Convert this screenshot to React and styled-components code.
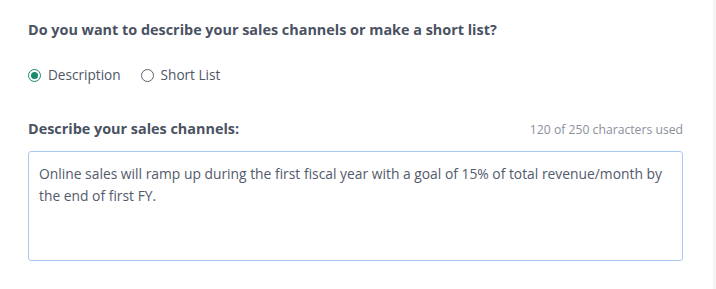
import React from 'react';
import styled, { createGlobalStyle } from 'styled-components';

const GlobalStyle = createGlobalStyle`
    html, body {
        margin: 0;
        padding: 0;
        background: #f3f4f5;
    }
    body {
        font-family: "Open Sans", "Noto Sans", sans-serif;
    }`;

const Page = styled.div`
    width: 713px;
    height: 289px;
    background: #ffffff;
    box-sizing: border-box;
    padding: 20px 30px 0 28px;`;

const Question = styled.h2`
    margin: 0;
    font-size: 14.4px;
    line-height: 20px;
    font-weight: 700;
    color: #4a5262;`;

const RadioRow = styled.div`
    display: flex;
    align-items: center;
    gap: 20px;
    margin-top: 25px;`;

const RadioOption = styled.label`
    display: flex;
    align-items: center;
    gap: 7px;
    font-size: 13.6px;
    line-height: 20px;
    color: #4f5668;
    cursor: pointer;`;

const RadioDot = styled.span`
    width: 13px;
    height: 13px;
    box-sizing: border-box;
    border-radius: 50%;
    border: 1.3px solid ${p => (p.checked ? '#1a8a6b' : '#5a6070')};
    display: flex;
    align-items: center;
    justify-content: center;
    &::after {
        content: '';
        width: 7px;
        height: 7px;
        border-radius: 50%;
        background: #1a8a6b;
        display: ${p => (p.checked ? 'block' : 'none')};
    }`;

const FieldHeader = styled.div`
    display: flex;
    justify-content: space-between;
    align-items: baseline;
    margin-top: 34px;`;

const FieldLabel = styled.div`
    font-size: 14.4px;
    line-height: 20px;
    font-weight: 700;
    color: #4a5262;`;

const Counter = styled.div`
    font-size: 12.2px;
    color: #8a909c;`;

const TextArea = styled.div`
    margin-top: 12px;
    height: 110px;
    box-sizing: border-box;
    border: 1px solid #a9c9f2;
    border-radius: 3px;
    padding: 11px 12px 11px 10px;
    font-size: 13.85px;
    line-height: 22px;
    color: #535a6b;`;

const App = () => {
    return (
        <>
            <GlobalStyle />
            <Page>
                <Question>Do you want to describe your sales channels or make a short list?</Question>
                <RadioRow>
                    <RadioOption>
                        <RadioDot checked />
                        Description
                    </RadioOption>
                    <RadioOption>
                        <RadioDot />
                        Short List
                    </RadioOption>
                </RadioRow>
                <FieldHeader>
                    <FieldLabel>Describe your sales channels:</FieldLabel>
                    <Counter>120 of 250 characters used</Counter>
                </FieldHeader>
                <TextArea>
                    Online sales will ramp up during the first fiscal year with a goal of 15% of total revenue/month by the end of first FY.
                </TextArea>
            </Page>
        </>
    );
}
export default App;
